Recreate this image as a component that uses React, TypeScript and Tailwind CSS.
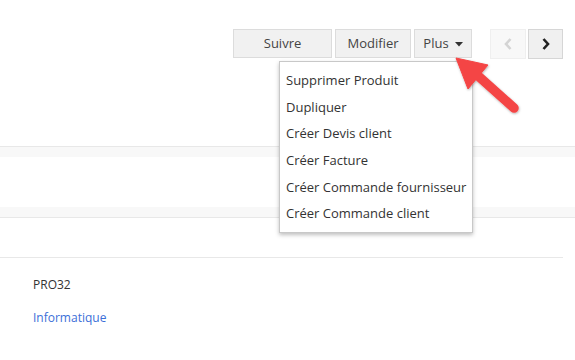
import { useState } from "react";

const menuItems = [
  "Supprimer Produit",
  "Dupliquer",
  "Créer Devis client",
  "Créer Facture",
  "Créer Commande fournisseur",
  "Créer Commande client",
];

const Caret = () => (
  <svg width="8" height="5" viewBox="0 0 8 5" className="ml-[6px] mt-[2px]">
    <polygon points="0,0 8,0 4,4.5" fill="#333" />
  </svg>
);

const Chevron = ({ dir, color }: { dir: "left" | "right"; color: string }) => (
  <svg width="10" height="14" viewBox="0 0 10 14">
    <path
      d={dir === "left" ? "M7.5 2 L3 7 L7.5 12" : "M2.5 2 L7 7 L2.5 12"}
      fill="none"
      stroke={color}
      strokeWidth="2.6"
    />
  </svg>
);

const App = () => {
  const [open] = useState(true);

  return (
    <div className="w-[575px] h-[360px] relative overflow-hidden bg-white font-['Open_Sans',sans-serif] text-[13px] text-[#333]">
      <div className="h-[29px]" />
      <div className="flex justify-end pr-[12px]">
        <div className="flex gap-[3px]">
          <button className="w-[99px] h-[29px] bg-[#f1f1f1] border border-[#dcdcdc] text-[#444]">
            Suivre
          </button>
          <button className="w-[76px] h-[29px] bg-[#f1f1f1] border border-[#dcdcdc] text-[#444]">
            Modifier
          </button>
          <div className="relative">
            <button className="w-[58px] h-[29px] bg-[#f1f1f1] border border-[#dcdcdc] text-[#444] flex items-center justify-center">
              Plus
              <Caret />
            </button>
            {open && (
              <ul className="absolute right-[-1px] top-[32px] w-[194px] py-[5px] bg-white border border-[#c8c8c8] shadow-[0_2px_4px_rgba(0,0,0,0.25)] z-10">
                {menuItems.map((item) => (
                  <li key={item} className="pl-[6px] leading-[26.67px] whitespace-nowrap">
                    {item}
                  </li>
                ))}
              </ul>
            )}
          </div>
        </div>
        <div className="flex gap-[2px] ml-[18px]">
          <button className="w-[36px] h-[30px] bg-[#f8f8f8] border border-[#efefef] flex items-center justify-center">
            <Chevron dir="left" color="#d4d4d4" />
          </button>
          <button className="w-[35px] h-[30px] bg-[#f0f0f0] border border-[#d6d6d6] flex items-center justify-center">
            <Chevron dir="right" color="#222" />
          </button>
        </div>
      </div>

      <div className="mt-[87px] border-t border-[#e8e8e8] h-[11px] bg-[#f8f8f8]" />
      <div className="h-[50px]" />
      <div className="h-[11px] bg-[#f8f8f8] border-b border-[#e8e8e8]" />
      <div className="h-[40px] mr-[12px] border-b border-[#e8e8e8]" />
      <div className="pl-[33px] pt-[18px] flex flex-col gap-[15px] text-[12px]">
        <span className="leading-[18px] text-[#333]">PRO32</span>
        <span className="leading-[18px] text-[#3b6fd8]">Informatique</span>
      </div>

      <svg
        className="absolute left-[440px] top-[45px] z-20"
        width="90"
        height="80"
        viewBox="440 45 90 80"
      >
        <defs>
          <filter id="sh" x="-20%" y="-20%" width="140%" height="140%">
            <feDropShadow dx="0.5" dy="1" stdDeviation="1" floodColor="#000" floodOpacity="0.3" />
          </filter>
        </defs>
        <g filter="url(#sh)" fill="#f44545" stroke="#f44545">
          <polygon points="456,58 488,65 468,89" strokeWidth="1" strokeLinejoin="round" />
          <line x1="476" y1="74" x2="514" y2="108" strokeWidth="9.5" strokeLinecap="round" />
        </g>
      </svg>
    </div>
  );
};

export default App;
